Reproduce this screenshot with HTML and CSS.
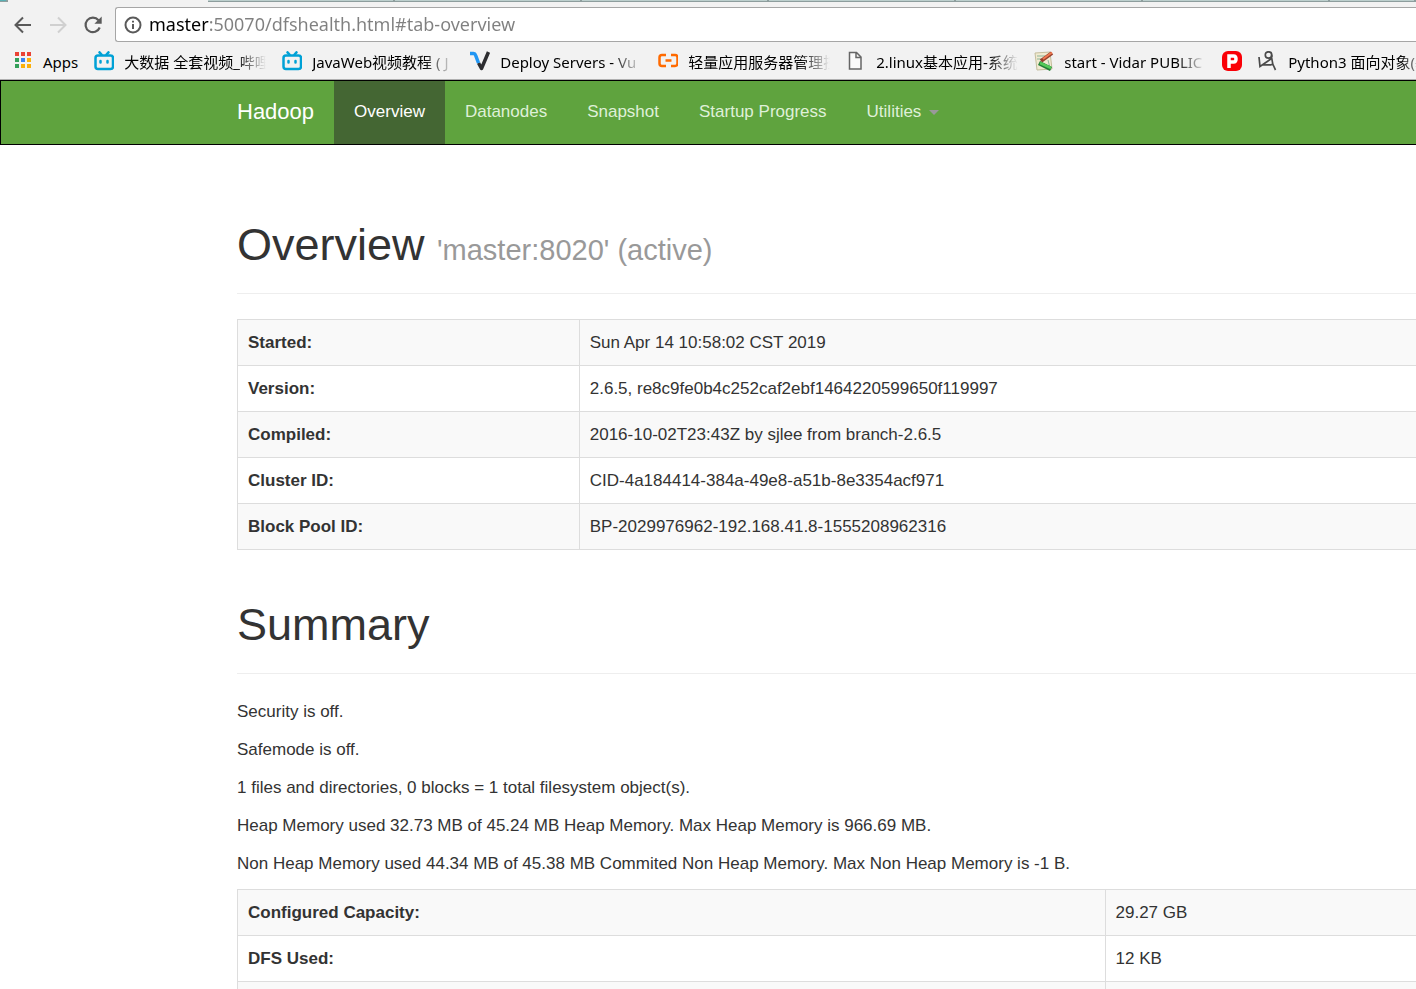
FILE: index.html
```html
<!DOCTYPE html>
<html lang="en">
<head>
    <meta charset="UTF-8">
    <meta name="viewport" content="width=device-width, initial-scale=1.0">
    <title>Namenode information</title>
    <link rel="stylesheet" href="styles.css">
</head>
<body>
    <header class="browser">
        <div class="tabs">
            <span class="tab-edge"></span>
            <span class="tab tab-active"></span>
            <span class="tab"></span>
            <span class="tab"></span>
            <span class="tab"></span>
            <span class="tab"></span>
            <span class="tab"></span>
            <span class="tab"></span>
            <span class="tab tab-last"></span>
        </div>

        <div class="toolbar">
            <button class="tool" type="button" aria-label="Back">
                <svg width="20" height="20" viewBox="0 0 20 20" fill="none" stroke="#5a5a5a" stroke-width="2"><path d="M18 10H3M10 2.500L2.500 10L10 17.500"/></svg>
            </button>
            <button class="tool" type="button" aria-label="Forward" disabled>
                <svg width="20" height="20" viewBox="0 0 20 20" fill="none" stroke="#d0d0d0" stroke-width="2"><path d="M2 10H17M10 2.500L17.500 10L10 17.500"/></svg>
            </button>
            <button class="tool" type="button" aria-label="Reload">
                <svg width="20" height="20" viewBox="0 0 20 20"><path d="M16.700 12.500A7.300 7.300 0 1 1 15.500 5.200" fill="none" stroke="#5a5a5a" stroke-width="2.200"/><path d="M18.700 1.500V8.800H11.400Z" fill="#5a5a5a"/></svg>
            </button>
            <label class="address">
                <svg width="18" height="18" viewBox="0 0 18 18" fill="none" stroke="#5a5a5a" stroke-width="2"><circle cx="9" cy="9" r="7.500"/><path d="M9 8V13M9 4.800V6.600"/></svg>
                <input class="url" type="text" aria-label="Address" value="master:50070/dfshealth.html#tab-overview">
            </label>
        </div>

        <nav class="bookmarks" aria-label="Bookmarks">
            <a class="bookmark" href="#">
                <svg width="20" height="20" viewBox="0 0 20 20"><path fill="#ea4335" d="M2 1h4v4H2zM8 1h4v4H8zM14 1h4v4h-4z"/><path fill="#34a05a" d="M2 7h4v4H2zM2 13h4v4H2z"/><path fill="#3b82f0" d="M8 7h4v4H8z"/><path fill="#fbb00b" d="M14 7h4v4h-4zM8 13h4v4H8zM14 13h4v4h-4z"/></svg>
                <span>Apps</span>
            </a>
            <a class="bookmark" href="#">
                <svg width="20" height="20" viewBox="0 0 20 20" fill="none" stroke="#00a1d6" stroke-width="2.500" stroke-linecap="round"><rect x="1.500" y="4.500" width="17.500" height="13.500" rx="2.500"/><path d="M5.500 1.300L7.500 3.500M14.500 1.300L12.500 3.500M6.500 10V11.500M13.500 10V11.500"/></svg>
                <span class="title">大数据 全套视频_哔哩</span>
            </a>
            <a class="bookmark" href="#">
                <svg width="20" height="20" viewBox="0 0 20 20" fill="none" stroke="#00a1d6" stroke-width="2.500" stroke-linecap="round"><rect x="1.500" y="4.500" width="17.500" height="13.500" rx="2.500"/><path d="M5.500 1.300L7.500 3.500M14.500 1.300L12.500 3.500M6.500 10V11.500M13.500 10V11.500"/></svg>
                <span class="title">JavaWeb视频教程 ( J</span>
            </a>
            <a class="bookmark" href="#">
                <svg width="20" height="20" viewBox="0 0 20 20" fill="none" stroke-width="3.500" stroke-linejoin="round"><path stroke="#2d2d30" d="M8.500 12L11.500 17.500L18.500 1"/><path stroke="#2196f3" d="M0 2.500H3.500Q5 2.500 5.500 4L8.500 12"/></svg>
                <span class="title">Deploy Servers - Vu</span>
            </a>
            <a class="bookmark" href="#">
                <svg width="20" height="20" viewBox="0 0 20 20" fill="none" stroke="#ff6a00" stroke-width="2.500"><path d="M8 4H4Q1.500 4 1.500 6.500V12.500Q1.500 15 4 15H8M13 4H17Q19.500 4 19.500 6.500V12.500Q19.500 15 17 15H13M7.500 9.500H13.500"/></svg>
                <span class="title">轻量应用服务器管理控</span>
            </a>
            <a class="bookmark" href="#">
                <svg width="20" height="20" viewBox="0 0 20 20" fill="#fafafa" stroke="#666" stroke-width="1.500"><path d="M3.500 1.500H10.500L15 6V18H3.500ZM10 1.500V6.500H15"/></svg>
                <span class="title">2.linux基本应用-系统</span>
            </a>
            <a class="bookmark" href="#">
                <svg width="20" height="20" viewBox="0 0 20 20" fill="none"><path fill="#f1ead0" stroke="#c4bd9c" d="M1 2L16 1L18 18L3 19Z"/><path stroke="#8bb49a" d="M3 5H11M3 8H9M14 9L16 17"/><path stroke="#963f2d" stroke-width="4" d="M7 10L18 2"/><path stroke="#ef7950" stroke-width="2" d="M9 8L18 1.500"/><path stroke="#237c37" stroke-width="4.500" d="M5 12L17 18"/><path stroke="#55ca58" stroke-width="2.500" d="M6 12L17 17"/></svg>
                <span class="title">start - Vidar PUBLIC</span>
            </a>
            <a class="bookmark" href="#" aria-label="P">
                <svg width="20" height="20" viewBox="0 0 20 20"><rect width="20" height="20" rx="6" fill="#fa0007"/><path d="M7 17V5H11.500Q14 5 14 8T11.500 11H7" fill="none" stroke="#fff" stroke-width="3.500"/></svg>
            </a>
            <a class="bookmark" href="#">
                <svg width="20" height="20" viewBox="0 0 20 20" fill="none" stroke="#4a4a4a" stroke-width="1.700"><circle cx="10.500" cy="4" r="3.200"/><path d="M13.500 4Q15 7 10 10L2 15.500L1 6M4 14L15 13.500M13.500 6Q14 13 17.500 19"/></svg>
                <span class="title">Python3 面向对象(基</span>
            </a>
        </nav>
    </header>

    <!-- hadoop navbar -->
    <nav class="navbar">
        <a class="brand" href="#">Hadoop</a>
        <ul class="nav">
            <li><a class="active" href="#tab-overview">Overview</a></li>
            <li><a href="#tab-datanode">Datanodes</a></li>
            <li><a href="#tab-snapshot">Snapshot</a></li>
            <li><a href="#tab-startup-progress">Startup Progress</a></li>
            <li><a href="#">Utilities <b class="caret"></b></a></li>
        </ul>
    </nav>

    <main class="container">
        <div class="page-header">
            <h1>Overview <small>'master:8020' (active)</small></h1>
        </div>
        <table class="table">
            <tr><th scope="row">Started:</th><td>Sun Apr 14 10:58:02 CST 2019</td></tr>
            <tr><th scope="row">Version:</th><td>2.6.5, re8c9fe0b4c252caf2ebf1464220599650f119997</td></tr>
            <tr><th scope="row">Compiled:</th><td>2016-10-02T23:43Z by sjlee from branch-2.6.5</td></tr>
            <tr><th scope="row">Cluster ID:</th><td>CID-4a184414-384a-49e8-a51b-8e3354acf971</td></tr>
            <tr><th scope="row">Block Pool ID:</th><td>BP-2029976962-192.168.41.8-1555208962316</td></tr>
        </table>

        <div class="page-header">
            <h1>Summary</h1>
        </div>
        <p>Security is off.</p>
        <p>Safemode is off.</p>
        <p>1 files and directories, 0 blocks = 1 total filesystem object(s).</p>
        <p>Heap Memory used 32.73 MB of 45.24 MB Heap Memory. Max Heap Memory is 966.69 MB.</p>
        <p>Non Heap Memory used 44.34 MB of 45.38 MB Commited Non Heap Memory. Max Non Heap Memory is -1 B.</p>
        <table class="table summary">
            <tr><th scope="row">Configured Capacity:</th><td>29.27 GB</td></tr>
            <tr><th scope="row">DFS Used:</th><td>12 KB</td></tr>
            <tr><th scope="row"></th><td></td></tr>
        </table>
    </main>
</body>
</html>
```
FILE: styles.css
```css
* {
    box-sizing: border-box;
}

html {
    height: 100%;
    overflow: hidden;
}

body {
    height: 100%;
    margin: 0;
    overflow: hidden;
    background-color: #fff;
    color: #333;
    font-family: "Liberation Sans", Arial, sans-serif;
    font-size: 17px;
    line-height: 25px;
}

a {
    color: inherit;
    text-decoration: none;
}

/* Browser bars */
.browser {
    background-color: #f2f2f2;
    border-bottom: 1px solid #b0b0b0;
    color: #000;
    font-family: "Noto Sans", "Noto Sans CJK SC", sans-serif;
}

.tabs {
    display: flex;
    height: 2px;
}

.tab,
.tab-edge {
    flex: 0 0 187px;
    background-color: #bccfcd;
    border-bottom: 1px solid #8d9d9d;
    border-right: 2px solid #8d9d9d;
}

.tab-edge {
    flex-basis: 8px;
    background-color: #58b0b4;
}

.tab-active {
    flex-basis: 200px;
    background-color: #f2f2f2;
    border-color: #f2f2f2;
}

.tab-last {
    flex: 1;
}

.toolbar {
    display: flex;
    align-items: center;
    padding-left: 13px;
    padding-top: 5px;
}

.tool {
    width: 20px;
    height: 20px;
    margin-right: 15px;
    padding: 0;
    border: none;
    background: none;
}

.tool svg,
.address svg,
.bookmark svg {
    display: block;
    flex: none;
}

.tool:nth-child(3) {
    margin-right: 12px;
}

.address {
    display: flex;
    flex: 1;
    align-items: center;
    gap: 7px;
    height: 35px;
    padding-left: 8px;
    background-color: #fff;
    border: 1px solid #a6a6a6;
    border-right: none;
    border-radius: 3px 0 0 3px;
}

/* host part is black, the rest is grey */
.url {
    flex: 1;
    height: 30px;
    padding: 0 0 2px;
    border: none;
    outline: none;
    background: linear-gradient(to right, #000 60px, #808080 60px);
    background-clip: text;
    -webkit-background-clip: text;
    color: transparent;
    font-family: "Noto Sans", sans-serif;
    font-size: 18px;
}

.bookmarks {
    display: flex;
    align-items: center;
    gap: 16px;
    height: 37px;
    padding-left: 13px;
    overflow: hidden;
}

.bookmark {
    display: flex;
    flex: none;
    align-items: center;
    gap: 10px;
    font-size: 15px;
    white-space: nowrap;
}

.bookmark span {
    padding-top: 3px;
}

.title {
    width: 142px;
    overflow: hidden;
    mask-image: linear-gradient(to right, #000 112px, transparent 142px);
}

/* Navbar */
.navbar {
    display: flex;
    height: 65px;
    padding-left: 236px;
    background-color: #5fa33e;
    border: 1px solid #000;
    border-right: none;
    line-height: 62px;
}

.brand {
    padding-right: 20px;
    color: #fff;
    font-size: 22px;
}

.nav {
    display: flex;
    margin: 0;
    padding: 0;
    list-style: none;
}

.nav a {
    display: block;
    height: 63px;
    padding: 0 20px;
    color: #dff0d8;
}

.nav .active {
    background-color: #446633;
    color: #fff;
}

.caret {
    display: inline-block;
    margin-left: 3px;
    vertical-align: middle;
    border-top: 5px solid #999;
    border-left: 5px solid transparent;
    border-right: 5px solid transparent;
}

/* Page content */
.container {
    padding-left: 237px;
}

.page-header {
    padding-bottom: 23px;
    margin: 50px 0 25px;
    border-bottom: 1px solid #eee;
}

.container > .page-header:first-child {
    margin-top: 75px;
}

h1 {
    margin: 0;
    font-size: 45px;
    font-weight: normal;
    line-height: 50px;
}

small {
    color: #999;
    font-size: 29px;
    line-height: 29px;
}

p {
    margin: 0 0 13px;
}

.table {
    width: 100%;
    table-layout: fixed;
    border-collapse: collapse;
}

.table th,
.table td {
    height: 46px;
    padding: 10px;
    border: 1px solid #ddd;
    border-right: none;
    text-align: left;
}

.table th {
    width: 29%;
}

.summary th {
    width: auto;
}

.summary td {
    width: 311px;
}

.table tr:nth-child(odd) {
    background-color: #f9f9f9;
}
```
